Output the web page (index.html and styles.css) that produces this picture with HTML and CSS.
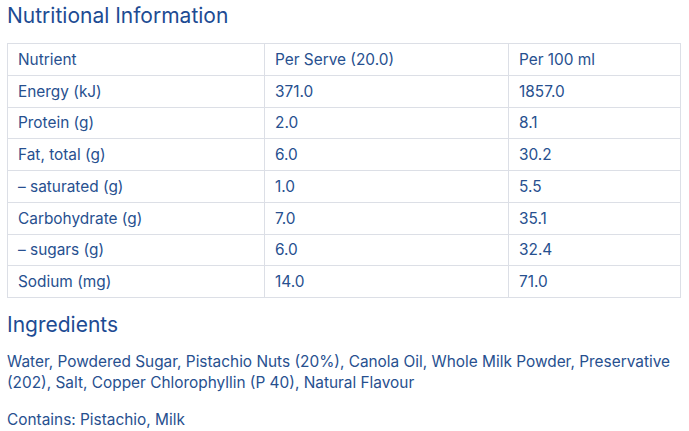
FILE: index.html
```html
<!DOCTYPE html>
<html>
<head>
<meta charset="utf-8">
<link rel="stylesheet" href="styles.css">
</head>
<body>
<div class="page">
  <h2 class="title">Nutritional Information</h2>
  <table class="nutri">
    <tr><td>Nutrient</td><td>Per Serve (20.0)</td><td>Per 100 ml</td></tr>
    <tr><td>Energy (kJ)</td><td>371.0</td><td>1857.0</td></tr>
    <tr><td>Protein (g)</td><td>2.0</td><td>8.1</td></tr>
    <tr><td>Fat, total (g)</td><td>6.0</td><td>30.2</td></tr>
    <tr><td>– saturated (g)</td><td>1.0</td><td>5.5</td></tr>
    <tr><td>Carbohydrate (g)</td><td>7.0</td><td>35.1</td></tr>
    <tr><td>– sugars (g)</td><td>6.0</td><td>32.4</td></tr>
    <tr><td>Sodium (mg)</td><td>14.0</td><td>71.0</td></tr>
  </table>
  <h2 class="title ingr">Ingredients</h2>
  <p class="text">Water, Powdered Sugar, Pistachio Nuts (20%), Canola Oil, Whole Milk Powder, Preservative (202), Salt, Copper Chlorophyllin (P 40), Natural Flavour</p>
  <p class="text contains">Contains: Pistachio, Milk</p>
</div>
</body>
</html>
```
FILE: styles.css
```css
html, body { margin: 0; padding: 0; background: #fff; }
body { font-family: Inter, "Open Sans", sans-serif; color: #27508f; }
.page { padding: 3px 7px 0 7px; }
.title { font-size: 21px; font-weight: 400; color: #1d4b93; margin: 0; line-height: 26px; }
.nutri { border-collapse: collapse; margin-top: 14px; width: 674px; font-size: 15.4px; table-layout: fixed; }
.nutri tr { height: 31.75px; }
.nutri td { border: 1px solid #dcdfe6; padding: 0 0 0 10px; box-sizing: border-box; }
.nutri td:nth-child(1) { width: 257px; }
.nutri td:nth-child(2) { width: 244px; }
.ingr { margin-top: 14px; }
.text { font-size: 15.4px; line-height: 21px; margin: 13px 0 0 0; }
.contains { margin-top: 16px; }
```
